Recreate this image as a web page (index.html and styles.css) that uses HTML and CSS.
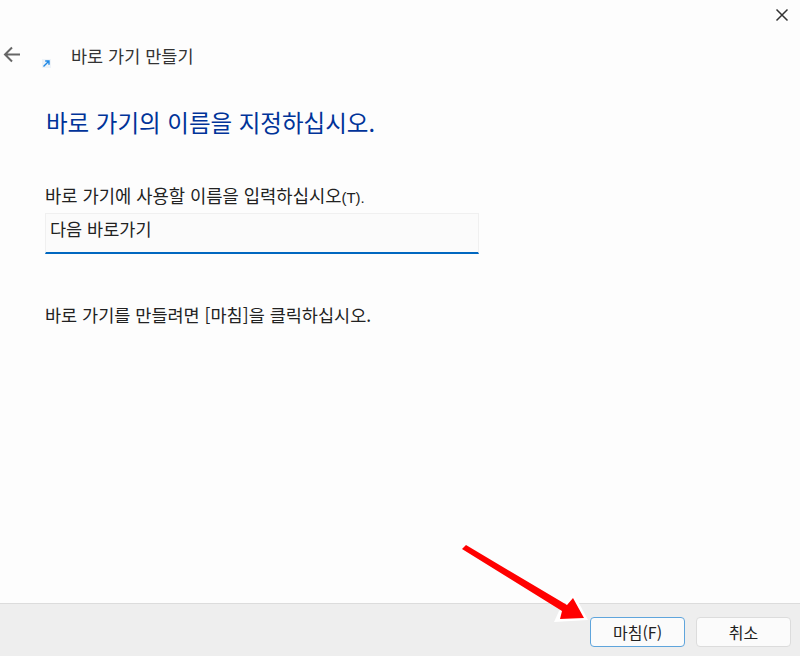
FILE: index.html
```html
<!DOCTYPE html>
<html lang="ko">
<head>
  <meta charset="UTF-8" />
  <title>바로 가기 만들기</title>
  <link rel="stylesheet" href="styles.css">
</head>
<body>

  <div class="window">
    <div class="titlebar">
      <svg class="close-icon" width="14" height="14" viewBox="0 0 14 14">
        <path d="M1.5 1.5 L12.5 12.5 M12.5 1.5 L1.5 12.5" stroke="#333" stroke-width="1.5" fill="none" />
      </svg>
    </div>

    <div class="header">
      <svg class="back-icon" width="18" height="18" viewBox="0 0 18 18">
        <path d="M17 8.5 H2 M9 1.5 L2 8.5 L9 15.5" stroke="#666" stroke-width="2" fill="none" />
      </svg>
      <svg class="shortcut-icon" width="9" height="9" viewBox="0 0 9 9">
        <rect width="9" height="9" fill="#eef3f8" />
        <path d="M1.5 7.5 L6.5 2.5 M3.2 2 H7 V5.8" stroke="#1e88e5" stroke-width="1.4" fill="none" />
      </svg>
      <span class="wizard-title">바로 가기 만들기</span>
    </div>

    <div class="content">
      <h1 class="heading">바로 가기의 이름을 지정하십시오.</h1>
      <label class="field-label" for="name">바로 가기에 사용할 이름을 입력하십시오<span class="accel">(T).</span></label>
      <input class="name-input" type="text" id="name" value="다음 바로가기" />
      <p class="hint">바로 가기를 만들려면 [마침]을 클릭하십시오.</p>
    </div>

    <div class="footer">
      <button class="btn btn-default">마침(F)</button>
      <button class="btn">취소</button>
    </div>

    <!-- annotation arrow drawn over the dialog -->
    <svg class="annotation" width="140" height="90" viewBox="0 0 140 90">
      <path d="M98 66 L93 77 L127 75 L112 47 L106 57 Z" fill="#fff" />
      <path d="M1 4 L5 0 L106 60 L112 53 L123 73 L99 74 L101 66 Z" fill="#f00" />
    </svg>
  </div>

</body>
</html>
```

FILE: styles.css
```css
* {
  box-sizing: border-box;
}

html, body {
  height: 100%;
}

body {
  margin: 0;
  background: #fff;
  color: #222;
  font-family: "Noto Sans CJK KR", "Noto Sans", sans-serif;
  font-size: 17.5px;
}

.window {
  position: relative;
  display: flex;
  flex-direction: column;
  height: 656px;
  background: #fdfdfd;
}

.titlebar {
  display: flex;
  justify-content: flex-end;
  height: 44px;
  padding: 8px 11px 0 0;
}

.header {
  display: flex;
  align-items: center;
  height: 24px;
  padding-left: 3px;
}

.back-icon {
  margin-top: -2px;
}

.shortcut-icon {
  margin: 14px 0 0 21px;
}

.wizard-title {
  margin-left: 20px;
  color: #333;
  line-height: 24px;
}

.content {
  flex: 1;
  padding: 0 0 0 45px;
}

.heading {
  margin: 39px 0 0 1px;
  color: #003399;
  font-size: 23.5px;
  font-weight: 400;
  line-height: 30px;
}

.field-label {
  display: block;
  height: 24px;
  margin: 46px 0 0;
  font-size: 17.7px;
  line-height: 24px;
}

.accel {
  font-family: "Liberation Sans", sans-serif;
  font-size: 15px;
  line-height: 1;
}

.name-input {
  display: block;
  width: 434px;
  height: 41px;
  margin-top: 6px;
  padding: 0 4px 10px;
  border: 1px solid #f0f0f0;
  border-bottom: 2px solid #0067c0;
  background: #fbfbfb;
  color: #222;
  font: inherit;
  outline: none;
}

.hint {
  margin: 49px 0 0;
  line-height: 24px;
}

.footer {
  display: flex;
  justify-content: flex-end;
  gap: 11px;
  height: 53px;
  padding: 13px 9px 0 0;
  border-top: 1px solid #dcdcdc;
  background: #eeeeee;
}

.btn {
  width: 95px;
  height: 30px;
  padding: 0;
  border: 1px solid #dcdcdc;
  border-radius: 4px;
  background: #fbfbfb;
  color: #222;
  font: inherit;
  font-size: 16px;
}

.btn-default {
  border-color: #5fa5dc;
}

.annotation {
  position: absolute;
  left: 461px;
  top: 545px;
}
```
